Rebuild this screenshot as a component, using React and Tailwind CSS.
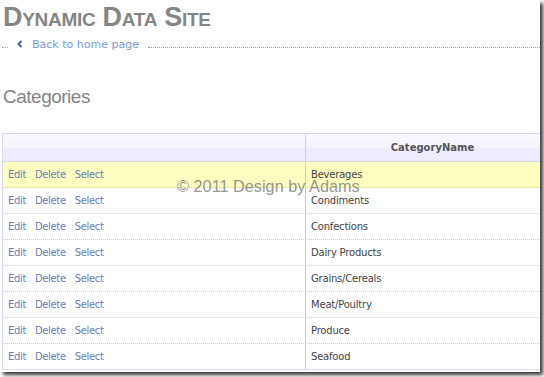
import React from "react";

const rows = [
  "Beverages",
  "Condiments",
  "Confections",
  "Dairy Products",
  "Grains/Cereals",
  "Meat/Poultry",
  "Produce",
  "Seafood",
];

export default function App() {
  return (
    <div className="relative w-[544px] h-[377px] overflow-hidden bg-white">
      <div className="relative w-[540px] h-[372px] overflow-hidden bg-white shadow-[3px_3px_4px_rgba(0,0,0,0.8)]">
        <div
          className="pl-[3px] pt-[4px] leading-[26px] text-[27px] font-bold tracking-[-0.3px] text-[#858585] [font-variant:small-caps]"
          style={{ fontFamily: '"Liberation Sans", Arial, sans-serif' }}
        >
          Dynamic Data Site
        </div>

        <div
          className="mt-[7px] flex h-[16px] items-center"
          style={{ fontFamily: '"DejaVu Sans", Verdana, sans-serif' }}
        >
          <div className="ml-[2px] mt-[4px] w-[6px] border-t border-dotted border-[#a8a8a8]" />
          <svg className="ml-[9px] mt-[-2px]" width="6" height="8" viewBox="0 0 6 8">
            <polyline points="4.5,1 1.5,4 4.5,7" fill="none" stroke="#4d5f92" strokeWidth="2" />
          </svg>
          <a className="ml-[9px] text-[11px] leading-[16px] text-[#7b98dc]">Back to home page</a>
          <div className="ml-[9px] mt-[4px] flex-1 border-t border-dotted border-[#a8a8a8]" />
        </div>

        <div
          className="mt-[34px] pl-[3px] text-[19px] leading-[19px] tracking-[-0.5px] text-[#858585]"
          style={{ fontFamily: '"Liberation Sans", Arial, sans-serif' }}
        >
          Categories
        </div>

        <div
          className="ml-[2px] mt-[27px] w-[556px] border-l border-[#d8d8f6] text-[10px]"
          style={{ fontFamily: '"DejaVu Sans", Verdana, sans-serif' }}
        >
          <div className="grid h-[29px] grid-cols-[302px_254px] border-y border-[#d8d8f6] bg-[linear-gradient(to_bottom,#f9f9ff_0%,#f4f4fe_50%,#ececfc_52%,#ececfc_100%)]">
            <div />
            <div className="flex items-center justify-center border-l border-[#cfcfd8] font-bold text-[#555555]">
              CategoryName
            </div>
          </div>
          {rows.map((name, i) => (
            <div
              key={name}
              className={
                "grid h-[26px] grid-cols-[302px_254px] " +
                (i === rows.length - 1
                  ? "border-b border-solid border-[#d8d8f6] "
                  : "border-b border-dotted border-[#c8c8f0] ") +
                (i === 0 ? "bg-[#ffffc2]" : "bg-white")
              }
            >
              <div className="flex items-center gap-[9px] pl-[5px] tracking-[-0.35px] text-[#6a7db5]">
                <a>Edit</a>
                <a>Delete</a>
                <a>Select</a>
              </div>
              <div className="flex items-center border-l border-[#cfcfcf] pl-[5px] tracking-[-0.2px] text-[#444444]">
                {name}
              </div>
            </div>
          ))}
        </div>

        <div
          className="absolute left-[177px] top-[178px] text-[16.3px] leading-[16px] text-[#7a7a7a]/80"
          style={{ fontFamily: '"Liberation Sans", Arial, sans-serif' }}
        >
          © 2011 Design by Adams
        </div>
      </div>
    </div>
  );
}
